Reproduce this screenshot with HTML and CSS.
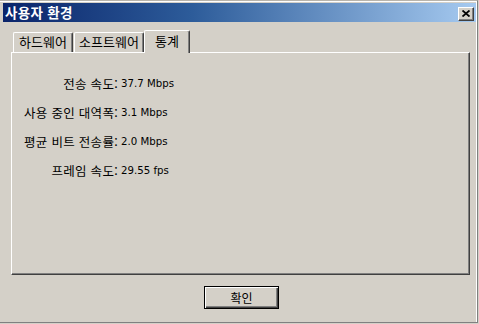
FILE: index.html
```html
<!DOCTYPE html>
<html lang="ko">
<head>
<meta charset="utf-8">
<title>사용자 환경</title>
<link rel="stylesheet" href="styles.css">
</head>
<body>
<div class="window">
  <div class="titlebar">
    <span class="title">사용자 환경</span>
    <span class="close">
      <svg width="8" height="7" viewBox="0 0 8 7"><path d="M0.5 0.5 L7.5 6.5 M7.5 0.5 L0.5 6.5" stroke="#000" stroke-width="1.8" fill="none"/></svg>
    </span>
  </div>
  <div class="content">
    <div class="tabs">
      <div class="tab t1">하드웨어</div>
      <div class="tab t2">소프트웨어</div>
      <div class="tab active">통계</div>
    </div>
    <div class="panel">
      <div class="stats">
        <div class="label">전송 속도:</div><div class="value">37.7 Mbps</div>
        <div class="label">사용 중인 대역폭:</div><div class="value">3.1 Mbps</div>
        <div class="label">평균 비트 전송률:</div><div class="value">2.0 Mbps</div>
        <div class="label">프레임 속도:</div><div class="value">29.55 fps</div>
      </div>
    </div>
    <div class="footer">
      <button class="ok">확인</button>
    </div>
  </div>
</div>
</body>
</html>
```
FILE: styles.css
```css
html, body {
  margin: 0;
  padding: 0;
  background: #d4d0c8;
}
body {
  width: 479px;
  height: 324px;
  overflow: hidden;
  font-family: "Noto Sans CJK KR", "Noto Sans", sans-serif;
  font-size: 12px;
  color: #000;
}
.window {
  box-sizing: border-box;
  width: 478px;
  height: 323px;
  padding: 3px 1px 0 3px;
  border-top: 1px solid #b8b4ac;
  border-right: 1px solid #808080;
  border-bottom: 1px solid #808080;
  box-shadow: inset -1px 0 0 #ffffff, inset 0 1px 0 #ffffff;
}
.titlebar {
  height: 19px;
  margin-top: -1px;
  background: linear-gradient(to right, #0a246a 0%, #2d5c9a 40%, #a6caf0 100%);
  display: flex;
  align-items: center;
  justify-content: space-between;
  padding: 0 2px 0 2px;
}
.title {
  color: #fff;
  font-weight: bold;
  font-size: 13.5px;
  line-height: 19px;
  letter-spacing: 0.3px;
}
.close {
  box-sizing: border-box;
  width: 16px;
  height: 14px;
  margin-top: 2px;
  background: #d4d0c8;
  border-top: 1px solid #fff;
  border-left: 1px solid #fff;
  border-right: 1px solid #404040;
  border-bottom: 1px solid #404040;
  box-shadow: inset -1px -1px 0 #808080;
  display: flex;
  align-items: center;
  justify-content: center;
}
.content {
  padding: 9px 6px 0 8px;
}
.tabs {
  display: flex;
  align-items: flex-end;
  height: 22px;
  padding-left: 2px;
  position: relative;
  z-index: 1;
  margin-bottom: -1px;
  font-size: 13px;
}
.tab {
  box-sizing: border-box;
  height: 20px;
  line-height: 17px;
  text-align: center;
  border-top: 1px solid #fff;
  border-left: 1px solid #fff;
  border-right: 1px solid #404040;
  box-shadow: inset -1px 0 0 #808080;
  border-radius: 2px 2px 0 0;
  margin-bottom: 1px;
}
.t1 { width: 60px; margin-right: 1px; }
.t2 { width: 70px; }
.tab.active {
  width: 46px;
  height: 23px;
  line-height: 19px;
  margin-bottom: 0;
  background: #d4d0c8;
}
.panel {
  box-sizing: border-box;
  height: 223px;
  border-top: 1px solid #fff;
  border-left: 1px solid #fff;
  border-right: 1px solid #404040;
  border-bottom: 1px solid #404040;
  box-shadow: inset -1px -1px 0 #808080;
  padding-top: 16px;
}
.stats {
  display: grid;
  grid-template-columns: 106px auto;
  grid-auto-rows: 29px;
  align-items: center;
}
.label {
  text-align: right;
  line-height: 29px;
  font-size: 12.5px;
  letter-spacing: 0.3px;
}
.value {
  padding-left: 3px;
  font-family: "DejaVu Sans", sans-serif;
  font-size: 10.2px;
  line-height: 29px;
}
.footer {
  display: flex;
  justify-content: center;
  padding-top: 11px;
  padding-right: 0;
}
.ok {
  box-sizing: border-box;
  width: 75px;
  height: 23px;
  margin-left: 2px;
  background: #d4d0c8;
  font-family: "Noto Sans CJK KR", sans-serif;
  font-size: 12px;
  line-height: 16px;
  color: #000;
  border: 1px solid #000;
  padding: 0;
  box-shadow: inset 1px 1px 0 #fff, inset -1px -1px 0 #404040, inset -2px -2px 0 #808080;
}
```
